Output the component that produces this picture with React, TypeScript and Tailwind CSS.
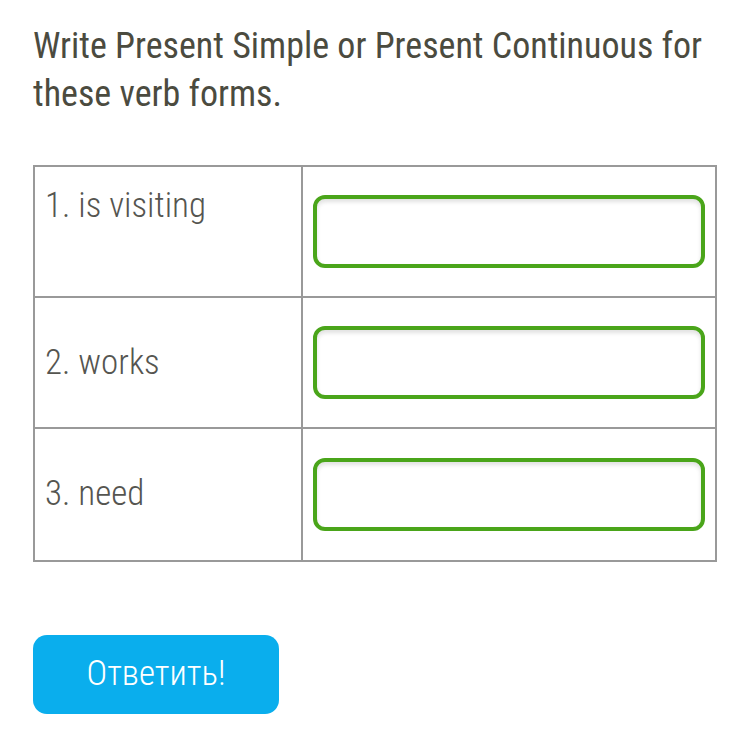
import React from "react";

const rows = ["1. is visiting", "2. works", "3. need"];

export default function App() {
  return (
    <div className="w-[750px] h-[750px] bg-white font-['Roboto_Condensed','Roboto',sans-serif] [font-stretch:condensed]">
      <div className="pl-[33px] pr-[10px] pt-[22px]">
        <h1 className="text-[36px] leading-[48px] text-[#4b4b3f] font-normal w-[700px]">
          Write Present Simple or Present Continuous for these verb forms.
        </h1>
        <div className="mt-[47px] w-[684px] border-2 border-[#999999] grid grid-cols-[268px_1fr]">
          {rows.map((r, i) => (
            <React.Fragment key={i}>
              <div
                className={`h-[131px] border-r-2 border-[#999999] ${i < 2 ? "border-b-2" : ""} px-[10px] ${i === 0 ? "pt-[19px]" : "pt-[45px]"} text-[35px] leading-[40px] font-light text-[#555550]`}
              >
                {r}
              </div>
              <div className={`h-[131px] border-[#999999] ${i < 2 ? "border-b-2" : ""} flex items-center px-[10px]`}>
                <div className="w-[392px] h-[73px] border-[4px] border-[#4aa51a] rounded-[12px] shadow-[inset_0_3px_4px_rgba(0,0,0,0.12)] bg-white" />
              </div>
            </React.Fragment>
          ))}
        </div>
        <button className="mt-[73px] w-[246px] h-[79px] rounded-[14px] bg-[#0aaeed] text-white text-[35px] font-light">
          Ответить!
        </button>
      </div>
    </div>
  );
}
